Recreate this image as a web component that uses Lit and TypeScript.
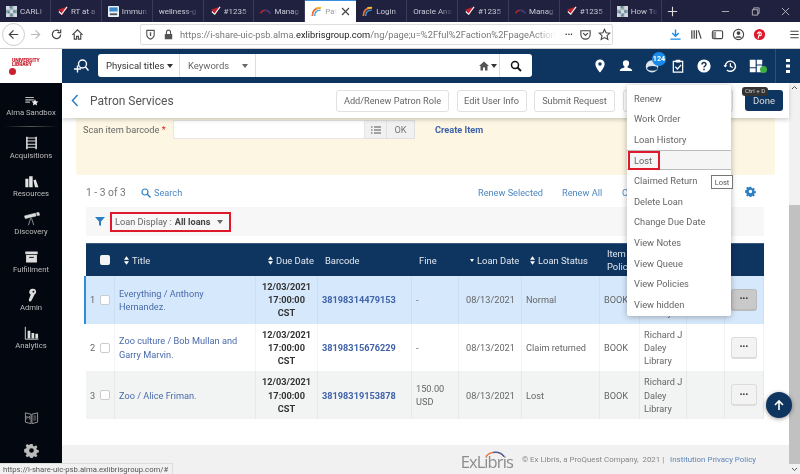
import { LitElement, html, css, svg } from "lit";
import { customElement } from "lit/decorators.js";

const tabs = [
  { t: "CARLI", i: "mosaic" }, { t: "RT at a", i: "check" }, { t: "Immun", i: "immun" }, { t: "wellness-g", i: "" },
  { t: "#1235", i: "check" }, { t: "Manag", i: "arc" }, { t: "Pat", i: "rainbow", active: true }, { t: "Login", i: "rainbow" },
  { t: "Oracle Ana", i: "" }, { t: "#1235", i: "check" }, { t: "Manag", i: "arc" }, { t: "#1235", i: "check" }, { t: "How To", i: "mosaic" },
];

const favicon = (k: string) => {
  if (k === "check") return html`<svg class="fav" viewBox="0 0 12 12"><path d="M1 4l9-3-4 9-2-4z" fill="#c9202c"/><path d="M2 6l3 3 6-8" fill="none" stroke="#fff" stroke-width="1.2"/></svg>`;
  if (k === "rainbow") return html`<svg class="fav" viewBox="0 0 12 12"><path d="M1.5 11C1.5 5 5 2 10.5 2" fill="none" stroke="#e8703a" stroke-width="2"/><path d="M4 11C4 7 6.500 4.500 10.500 4.500" fill="none" stroke="#3aa0dd" stroke-width="1.500"/><path d="M6 2.400C8 1.600 9.500 1.600 11 2" fill="none" stroke="#f2c230" stroke-width="2"/></svg>`;
  if (k === "arc") return html`<svg class="fav" viewBox="0 0 12 12"><path d="M.5 8C3 3.500 8 3.500 11.500 8" fill="none" stroke="#b3262d" stroke-width="1.400"/><path d="M5 5C7 4 9.500 5 11.500 8" fill="none" stroke="#27408b" stroke-width="1.400"/></svg>`;
  if (k === "immun") return html`<svg class="fav" viewBox="0 0 12 12"><rect width="12" height="12" rx="1" fill="#e9f2fb"/><rect x="1.500" y="1.500" width="9" height="4.500" fill="#3a8ad0"/><rect x="2" y="8" width="8" height="2" fill="#555"/></svg>`;
  if (k === "mosaic") return html`<svg class="fav" viewBox="0 0 12 12"><rect width="12" height="12" fill="#8fa9a8"/><path d="M0 0h4v4H0zM8 0h4v4H8zM4 4h4v4H4zM0 8h4v4H0zM8 8h4v4H8z" fill="#d3d8e2"/><path d="M4 0h2v2H4zM2 6h2v2H2zM8 5h2v2H8zM5 9h2v2H5z" fill="#5a7f9a"/></svg>`;
  return "";
};

const navItems: [string, any][] = [
  ["Alma Sandbox", svg`<path d="M3 5h11v1.500H3zM3 8h11v1.500H3zM3 11h6v1.500H3z" fill="#bbb"/><path d="M15.500 8l1.300 2.700 3 .4-2.200 2 .6 3-2.700-1.500-2.700 1.500.6-3-2.200-2 3-.4z" fill="#eee"/>`],
  ["Acquisitions", svg`<path d="M5 1v16M17 1v16" stroke="#ddd" stroke-width="2"/><path d="M5 2.500h12M5 6.500h12M5 10.500h12M5 14.500h12" fill="none" stroke="#ddd" stroke-width="1.300"/>`],
  ["Resources", svg`<path d="M3 6h4v11H3zM8 3h4.500v14H8zM13.500 8l3-1L20 17h-4.500z" fill="#e4e4e4"/>`],
  ["Discovery", svg`<path d="M2 5l14-3.500 1 3.500-14 3.500zM17.500 1l3-.5 1 3.500-3 .5zM10 8l-3 9M11 8l3 9" fill="#ddd" stroke="#ddd" stroke-width=".8"/>`],
  ["Fulfillment", svg`<path d="M3 2h16v3.500H3zM4 6.500h14V16H4z" fill="#ddd"/><path d="M8 9.500h6" stroke="#111" stroke-width="1.300"/>`],
  ["Admin", svg`<path fill-rule="evenodd" d="M13 1a4 4 0 0 1 2 7.500L10.500 17 8 17.500l-.5-2.500L10 8.300A4 4 0 0 1 13 1zm.500 2.500a1.200 1.200 0 1 0 0 2.400 1.200 1.200 0 0 0 0-2.400z" fill="#ddd"/>`],
  ["Analytics", svg`<path d="M3 1v16h17" fill="none" stroke="#ddd" stroke-width="1.200"/><path d="M6 6h3.500v10H6zM11 9h3.500v7H11zM16 10h3.500v6H16z" fill="#ddd"/>`],
];

const menu = ["Renew", "Work Order", "Loan History", "Lost", "Claimed Return", "Delete Loan", "Change Due Date", "View Notes", "View Queue", "View Policies", "View hidden"];

const rows = [
  { n: 1, title: "Everything / Anthony Hernandez.", code: "38198314479153", fine: "-", status: "Normal", sel: true },
  { n: 2, title: "Zoo culture / Bob Mullan and Garry Marvin.", code: "38198315676229", fine: "-", status: "Claim returned" },
  { n: 3, title: "Zoo / Alice Friman.", code: "38198319153878", fine: "150.00 USD", status: "Lost", alt: true },
];

const sort = html`<svg class="sort" viewBox="0 0 6 10"><path d="M3 0l3 4H0zM3 10l3-4H0z" fill="#fff"/></svg>`;

@customElement("app-root")
export class AppRoot extends LitElement {
  static styles = css`
    :host { display: flex; flex-direction: column; position: relative; width: 800px; height: 474px; overflow: hidden; background: #fff;
      font-family: Roboto, "Liberation Sans", sans-serif; font-size: 9.200px; color: #666; filter: blur(.35px); }
    .tabs { display: flex; height: 22px; background: #20213f; color: #c9cbd6; font-size: 8px; flex: none; align-items: stretch; }
    .tab { width: 50.900px; border-right: 1px solid #3a3b58; display: flex; align-items: center; gap: 3px; padding-left: 6px; box-sizing: border-box; white-space: nowrap; overflow: hidden; flex: none; }
    .tab span { -webkit-mask-image: linear-gradient(90deg, #000 65%, transparent); mask-image: linear-gradient(90deg, #000 65%, transparent); width: 27px; overflow: hidden; flex: none; }
    .tab.plain span { width: 40px; }
    .tab.active { background: #fff; color: #999; border-right: 0; border-top: 1px solid #3b8fe0; }
    .tab.active span { width: 12px; }
    .tab .x { margin-left: 1px; width: 9px; height: 9px; flex: none; }
    .fav { width: 11px; height: 11px; flex: none; }
    .newtab { width: 22px; display: flex; align-items: center; justify-content: center; }
    .winctl { margin-left: auto; display: flex; align-items: center; }
    .winctl span { width: 30px; display: flex; justify-content: center; }
    .winctl svg { width: 9px; height: 9px; }
    .urlbar { height: 26.500px; flex: none; display: flex; align-items: center; background: #fff; border-bottom: 1px solid #ccc; box-sizing: border-box; padding-left: 2px; }
    .round { width: 23px; height: 23px; border-radius: 50%; border: 1px solid #ccc; box-sizing: border-box; display: flex; align-items: center; justify-content: center; flex: none; }
    .ub { width: 13px; height: 13px; flex: none; }
    .navset { display: flex; align-items: center; gap: 8px; margin: 0 56px 0 4px; flex: none; }
    .addr { width: 473px; height: 21px; border: 1px solid #ddd; border-radius: 2px; box-sizing: border-box; display: flex; align-items: center; padding: 0 0 0 3px; gap: 5px; font-size: 9.300px; color: #777; white-space: nowrap; overflow: hidden; margin-right: 56px; flex: none; }
    .addr b { font-weight: 400; color: #222; }
    .addr .u { width: 376px; overflow: hidden; flex: none; -webkit-mask-image: linear-gradient(90deg, #000 94%, transparent); mask-image: linear-gradient(90deg, #000 94%, transparent); }
    .addr .r { display: flex; gap: 6px; margin-left: 4px; align-items: center; }
    .addr .r b { font-size: 7px; letter-spacing: .3px; }
    .tools { display: flex; align-items: center; gap: 8px; }
    .menu-btn { margin-left: 14px; }
    .bodyrow { flex: 1; min-height: 0; display: flex; }
    .side { width: 62px; flex: none; background: #03070f; display: flex; flex-direction: column; align-items: center; color: #bdbdbd; font-size: 7.700px; }
    .logo { width: 100%; height: 34.500px; background: #fff; flex: none; padding: 9px 0 0 12px; box-sizing: border-box; color: #c8202f; font-size: 5px; font-weight: 900; line-height: 4px; letter-spacing: -.1px; }
    .logo i { display: block; width: 7px; height: 7px; border-radius: 50%; background: #c8202f; margin: 2px 0 0 -3px; }
    .nav { height: 38px; display: flex; flex-direction: column; align-items: center; justify-content: flex-end; white-space: nowrap; flex: none; padding-bottom: 1px; box-sizing: border-box; gap: 1px; }
    .nav.first { height: 32px; }
    .navsep { height: 1px; margin: 8px 4px -4px; background: linear-gradient(90deg, transparent, #555, transparent); }
    .navlist { padding-top: 3px; width: 100%; display: flex; flex-direction: column; align-items: stretch; }
    .nav svg { width: 17px; height: 14px; flex: none; }
    .sideend { margin-top: auto; display: flex; flex-direction: column; align-items: center; gap: 18px; padding-bottom: 16px; }
    .sideend svg { width: 15px; height: 15px; }
    .main { flex: 1; min-width: 0; display: flex; flex-direction: column; }
    .hdr { height: 34.500px; background: #0e3460; flex: none; display: flex; align-items: center; padding-left: 11px; color: #fff; }
    .hdr > svg.find { width: 16px; height: 16px; margin-right: 9px; flex: none; }
    .search { width: 434px; height: 23px; background: #fff; border-radius: 3px; display: flex; color: #333; font-size: 9.500px; flex: none; align-items: stretch; }
    .search div { display: flex; align-items: center; border-right: 1px solid #ddd; box-sizing: border-box; }
    .s1 { width: 82px; padding-left: 8px; gap: 2px; }
    .s2 { width: 76px; padding: 0 7px 0 8px; justify-content: space-between; color: #666; }
    .s3 { flex: 1; justify-content: flex-end; padding-right: 2px; gap: 2px; }
    .search .s4 { width: 32px; justify-content: center; border: 0; }
    .caret { width: 0; height: 0; border: 3px solid transparent; border-top: 4px solid currentColor; border-bottom: 0; display: inline-block; }
    .hicons { display: flex; align-items: center; margin-left: 55px; position: relative; flex: none; }
    .hicons span { width: 26px; display: flex; justify-content: center; position: relative; flex: none; }
    .hicons svg { width: 14px; height: 14px; }
    .badge { position: absolute; left: 65px; top: 3px; width: 14px; height: 14px; border-radius: 50%; background: #1a8be8; font-size: 7.200px; font-weight: 700; display: flex; align-items: center; justify-content: center; }
    .dot { position: absolute; left: 16.500px; bottom: 0; width: 7px; height: 7px; border-radius: 50%; background: #3cb043; }
    .vline { width: 1px; height: 34px; background: #2c5078; margin-left: 6px; flex: none; }
    .kebab { width: 24px; display: flex; justify-content: center; flex: none; }
    .area { flex: 1; min-height: 0; display: flex; }
    .page { flex: 1; min-width: 0; display: flex; flex-direction: column; }
    .scrollbar { width: 11px; flex: none; background: #f1f1f1; display: flex; flex-direction: column; align-items: center; color: #555; }
    .scrollbar .gap { height: 112px; flex: none; background: #f1f1f1; }
    .scrollbar .thumb { width: 100%; flex: 1; background: #c1c1c1; }
    .scrollbar svg { width: 7px; height: 10px; flex: none; }
    .titlebar { height: 35px; flex: none; display: flex; align-items: center; padding-left: 9px; box-shadow: 0 2px 4px rgba(0,0,0,.18); position: relative; z-index: 1; background: #fff; }
    .titlebar > svg { width: 8px; height: 13px; margin-right: 11px; flex: none; }
    .titlebar h1 { margin: 0; font-size: 12px; font-weight: 400; color: #555; flex: none; width: 246px; }
    .btn { height: 22px; border: 1px solid #e1e1e1; border-radius: 3px; background: #fff; display: flex; align-items: center; justify-content: center; color: #666; box-sizing: border-box; white-space: nowrap; margin-right: 7.500px; flex: none; }
    .b1 { width: 113px; } .b2 { width: 70px; } .b3 { width: 81px; } .b4 { width: 110px; }
    .done { width: 38px; height: 21px; border-radius: 3px; background: #0e3460; color: #ddd; display: flex; align-items: center; justify-content: center; font-size: 9.500px; margin-left: 5px; position: relative; flex: none; }
    .done em { position: absolute; top: -3px; left: -3px; height: 9px; padding: 0 3px; border-radius: 3px; background: #333; color: #ccc; font-style: normal; font-size: 6.200px; line-height: 9px; white-space: nowrap; }
    .panel { height: 57px; flex: none; margin: 0 14px; background: #fdf6e3; border-radius: 0 0 3px 3px; display: flex; align-items: flex-start; padding: 2px 0 0 7px; box-sizing: border-box; }
    .panel label { width: 90px; flex: none; line-height: 19px; white-space: nowrap; }
    .panel label b { color: #d22; font-weight: 400; }
    .inp { width: 192px; height: 19px; background: #fff; border: 1px solid #e6e6e6; box-sizing: border-box; flex: none; }
    .ib { height: 19px; background: #f1f1f1; border: 1px solid #e0e0e0; border-left: 0; box-sizing: border-box; display: flex; align-items: center; justify-content: center; flex: none; color: #777; }
    .ib.list { width: 22px; } .ib.ok { width: 28px; }
    .ib svg { width: 10px; height: 8px; }
    .create { margin-left: 20px; line-height: 19px; color: #3f62a8; font-weight: 700; }
    .tb { height: 32px; flex: none; display: flex; align-items: center; padding: 3px 0 0 24px; box-sizing: border-box; color: #4c87c0; position: relative; }
    .tb .cnt { color: #777; font-size: 10.300px; width: 55px; flex: none; }
    .tb .srch { display: flex; gap: 3px; align-items: center; width: 337px; flex: none; }
    .tb .srch svg { width: 10px; height: 10px; }
    .tb .ra { width: 84px; flex: none; }
    .tb .rb { width: 60px; flex: none; }
    .tb .gear { width: 11px; height: 11px; position: absolute; left: 683px; top: 11px; }
    .filter { height: 29px; flex: none; margin: 0 24px; width: 678px; background: #f7f7f7; display: flex; align-items: center; padding-left: 9px; box-sizing: border-box; }
    .filter svg { width: 10px; height: 9px; margin-right: 5px; }
    .redbox { height: 20px; width: 121px; border: 2px solid #e0182b; box-sizing: border-box; display: flex; align-items: center; padding-left: 3px; gap: 3px; color: #666; white-space: nowrap; }
    .redbox b { color: #444; } .redbox .caret { margin-left: 4px; }
    .table { margin: 7px 0 0 24px; width: 678px; flex: none; }
    .r { display: grid; grid-template-columns: 9px 20px 141px 62px 94px 47px 63px 78px 40px 47px 38px 39px; align-items: stretch; }
    .r.head { height: 33px; background: #0e3460; color: #e3e8ee; border-top: 1px solid #3c5a80; box-sizing: border-box; font-size: 9.400px; line-height: 13px; }
    .r.body { height: 47.700px; line-height: 13.200px; color: #666; background: #fff; }
    .r.body.sel { background: #d6e9fc; box-shadow: -2px 0 0 #2d8fd5; }
    .r.body.alt { background: #f2f4f4; }
    .c { display: flex; align-items: center; padding: 0 4px; box-sizing: border-box; overflow: hidden; }
    .r.body .c { border-right: 1px solid rgba(0,0,0,.045); }
    .r.head .c { gap: 3px; white-space: nowrap; overflow: visible; padding-left: 7px; }
    .r.head .h-title { padding-left: 9px; }
    .r.head .h-due { padding-left: 12px; }
    .r.head .h-loan { padding-left: 11px; }
    .r.head .h-status { padding-left: 8px; }
    .sort { width: 5px; height: 9px; flex: none; }
    .tri { width: 0; height: 0; border: 2.500px solid transparent; border-top: 3.500px solid #fff; border-bottom: 0; flex: none; }
    .r .c.num { padding: 0 0 0 4px; overflow: visible; border-right: 0; } .r .c.ck { padding: 0; justify-content: center; }
    .box { width: 10px; height: 10px; border-radius: 2px; background: #fff; border: 1px solid #ccc; box-sizing: border-box; display: block; }
    .head .box { border: 0; background: #f4f4f4; }
    .ti { color: #4a6aab; }
    .du { color: #333; font-weight: 700; text-align: center; justify-content: center; }
    .bc { color: #3f62a8; font-weight: 700; }
    .ld { padding-left: 7px; }
    .lib { padding-right: 0; }
    .dots { width: 26px; height: 22px; border: 1px solid #dcdcdc; border-bottom-width: 2px; border-radius: 3px; background: #f3f3f3; box-sizing: border-box; display: flex; align-items: center; justify-content: center; color: #333; font-weight: 900; font-size: 7px; line-height: 6px; letter-spacing: .2px; }
    .sel .dots { background: #c9c9c9; border-color: #bbb; }
    .dc { justify-content: center; padding: 0; }
    .foot { margin-top: auto; height: 29px; flex: none; background: #f1f1f1; display: flex; align-items: center; justify-content: flex-end; padding: 0 33px 0 0; font-size: 7.900px; color: #888; white-space: nowrap; }
    .ex { position: relative; margin-right: 9px; font-family: "Open Sans", sans-serif; font-size: 16.500px; letter-spacing: -.9px; color: #8c8c8c; line-height: 18px; padding-top: 4px; }
    .ex svg { position: absolute; left: 24px; top: 1px; width: 20px; height: 7px; }
    .foot a { color: #5d86b8; margin-left: 4px; }
    .menu { position: absolute; left: 627px; top: 85px; width: 104px; height: 231px; background: #fff; border-radius: 2px; box-shadow: 0 1px 6px rgba(0,0,0,.3); padding: 3px 0 0; box-sizing: border-box; z-index: 5; color: #666; font-size: 9.300px; }
    .mi { height: 20.600px; display: flex; align-items: center; padding-left: 7px; box-sizing: border-box; }
    .mi.on { background: #f5f5f5; border-top: 1px solid #bbb; border-bottom: 1px solid #bbb; padding-left: 1px; }
    .mi.on span { border: 2px solid #e0182b; height: 19px; width: 32px; box-sizing: border-box; display: flex; align-items: center; padding-left: 4px; flex: none; }
    .tip { position: absolute; left: 711px; top: 175px; height: 14px; width: 22px; background: #fff; border: 1px solid #777; box-sizing: border-box; display: flex; align-items: center; justify-content: center; font-size: 7.500px; z-index: 6; color: #555; }
    .status { position: absolute; left: 0; bottom: 0; height: 11px; width: 173px; background: #f1f1f1; border: 1px solid #ddd; border-left: 0; border-bottom: 0; box-sizing: border-box; font-size: 7.700px; line-height: 11px; color: #555; padding-left: 3px; white-space: nowrap; z-index: 7; overflow: hidden; }
    .up { position: absolute; left: 766px; top: 392px; width: 26px; height: 26px; border-radius: 50%; background: #0e3460; box-shadow: 0 1px 4px rgba(0,0,0,.4); display: flex; align-items: center; justify-content: center; z-index: 6; }
    .up svg { width: 12px; height: 12px; }
  `;

  render() {
    return html`
      <div class="tabs">
        ${tabs.map(t => html`<div class="tab ${t.active ? "active" : ""} ${t.i ? "" : "plain"}">${favicon(t.i)}<span>${t.t}</span>${t.active ? html`<svg class="x" viewBox="0 0 9 9"><path d="M1 1l7 7M8 1L1 8" stroke="#444" stroke-width="1.200"/></svg>` : ""}</div>`)}
        <div class="newtab"><svg class="ub" viewBox="0 0 14 14"><path d="M7 2v10M2 7h10" stroke="#ddd" stroke-width="1.200"/></svg></div>
        <div class="winctl">
          <span><svg viewBox="0 0 10 10"><path d="M1 5h8" stroke="#bbb"/></svg></span>
          <span><svg viewBox="0 0 10 10"><path d="M1.500 3h6v6h-6zM3 3V1h6v6H7.500" fill="none" stroke="#bbb"/></svg></span>
          <span><svg viewBox="0 0 10 10"><path d="M1 1l8 8M9 1l-8 8" stroke="#bbb"/></svg></span>
        </div>
      </div>
      <div class="urlbar">
        <div class="round"><svg class="ub" viewBox="0 0 14 14"><path d="M12 7H2.500M7 2.500L2.500 7 7 11.500" fill="none" stroke="#444" stroke-width="1.300"/></svg></div>
        <div class="navset">
          <svg class="ub" viewBox="0 0 14 14"><path d="M2 7h9.500M7 2.500L11.500 7 7 11.500" fill="none" stroke="#bbb" stroke-width="1.300"/></svg>
          <svg class="ub" viewBox="0 0 14 14"><path d="M11.500 7A4.500 4.500 0 1 1 10 3.500M11.500 1.500v3.500H8" fill="none" stroke="#444" stroke-width="1.300"/></svg>
          <svg class="ub" viewBox="0 0 14 14"><path d="M1.500 7.500L7 2l5.500 5.500M3.500 6.500V12h2.500V9h2v3h2.500V6.500" fill="none" stroke="#444" stroke-width="1.200"/></svg>
        </div>
        <div class="addr">
          <svg class="ub" viewBox="0 0 14 14"><path d="M3 2.500h8v5c0 2.500-2 3.500-4 4.500-2-1-4-2-4-4.500z" fill="none" stroke="#555" stroke-width="1.200"/><path d="M7 4.500v4" stroke="#555" stroke-width="1.500"/></svg>
          <svg class="ub" viewBox="0 0 14 14"><path d="M3 6.500h8V12H3z" fill="#555"/><path d="M4.800 6.500V4.500a2.200 2.200 0 0 1 4.400 0v2" fill="none" stroke="#555" stroke-width="1.200"/></svg>
          <div class="u">https://i-share-uic-psb.alma.<b>exlibrisgroup.com</b>/ng/page;u=%2Fful%2Faction%2FpageAction.lo</div>
          <div class="r">
            <b>•••</b>
            <svg class="ub" viewBox="0 0 14 14"><path d="M2 3h10v4a5 5 0 0 1-10 0z" fill="none" stroke="#444" stroke-width="1.200"/><path d="M4.500 5.500L7 8l2.500-2.500" fill="none" stroke="#444" stroke-width="1.200"/></svg>
            <svg class="ub" viewBox="0 0 14 14"><path d="M7 1.500l1.700 3.700 4 .4-3 2.700.9 4L7 10.300l-3.600 2 .9-4-3-2.700 4-.4z" fill="none" stroke="#444" stroke-width="1.200"/></svg>
          </div>
        </div>
        <div class="tools">
          <svg class="ub" viewBox="0 0 14 14"><path d="M7 1.500v7M3.500 5.500L7 9l3.500-3.500M1.500 12h11" fill="none" stroke="#1a8be8" stroke-width="1.500"/></svg>
          <svg class="ub" viewBox="0 0 14 14"><path d="M2 2.500v9M4.500 2.500v9M7 2.500v9M9 2.500l3 9" fill="none" stroke="#444" stroke-width="1.300"/></svg>
          <svg class="ub" viewBox="0 0 14 14"><rect x="1.500" y="3" width="11" height="8.500" rx="1.500" fill="none" stroke="#444" stroke-width="1.200"/><path d="M2 4h3.500v7H2z" fill="#999"/></svg>
          <svg class="ub" viewBox="0 0 14 14"><circle cx="7" cy="7" r="5.500" fill="none" stroke="#444" stroke-width="1.200"/><circle cx="7" cy="5.500" r="2" fill="#444"/><path d="M3.500 10.500c1-2 6-2 7 0" fill="#444"/></svg>
          <svg class="ub" viewBox="0 0 14 14"><circle cx="7" cy="7" r="6" fill="#e0182b"/><path d="M5.500 11.500L7 5.500M5 6.500c0-3 4.500-2.500 4 .3-.3 1.700-2 1.700-2.500.7" fill="none" stroke="#fff" stroke-width="1.200"/></svg>
          <svg class="ub menu-btn" viewBox="0 0 14 14"><path d="M2.500 3.500h9M2.500 7h9M2.500 10.500h9" stroke="#444" stroke-width="1.300"/></svg>
        </div>
      </div>
      <div class="bodyrow">
        <div class="side">
          <div class="logo">UNIVERSITY<br>LIBRARY<i></i></div>
          <div class="navlist">
            ${navItems.map(([l, ic], i) => html`
              <div class="nav ${i === 0 ? "first" : ""}"><svg viewBox="0 0 22 18">${ic}</svg><span>${l}</span></div>
              ${i === 0 ? html`<div class="navsep"></div>` : ""}`)}
          </div>
          <div class="sideend">
            <svg viewBox="0 0 16 16"><path d="M1.500 3l6 1.500v10l-6-1.500zM8.500 4.500l6-1.500v10l-6 1.500z" fill="none" stroke="#999" stroke-width="1"/><path d="M10 6.500h3M10 8.500h3M10 10.500h3" stroke="#999" stroke-width=".8"/><path d="M3 10V6.500l1.500 2 1.500-2V10" fill="none" stroke="#999" stroke-width=".8"/></svg>
            <svg viewBox="0 0 16 16"><path fill="#bbb" fill-rule="evenodd" d="M6.800 1h2.400l.4 2 1.300.6 1.800-1.100 1.600 1.700-1.100 1.700.6 1.400 2 .4v2.400l-2 .4-.6 1.400 1.100 1.700-1.600 1.700-1.800-1.100-1.300.6-.4 2H6.800l-.4-2-1.300-.6-1.800 1.100-1.600-1.700 1.100-1.700-.6-1.400-2-.4V6.300l2-.4.6-1.400-1.100-1.700 1.600-1.700 1.800 1.100 1.300-.6zM8 5.500a2.500 2.500 0 1 0 0 5 2.500 2.500 0 0 0 0-5z"/></svg>
          </div>
        </div>
        <div class="main">
          <div class="hdr">
            <svg class="find" viewBox="0 0 16 16"><circle cx="9.500" cy="6" r="4" fill="none" stroke="#fff" stroke-width="1.400"/><path d="M12.500 9l3 3.500M1 11h7M4.500 7.500v7" stroke="#fff" stroke-width="1.400"/></svg>
            <div class="search">
              <div class="s1">Physical titles <i class="caret"></i></div>
              <div class="s2">Keywords <i class="caret"></i></div>
              <div class="s3"><svg width="10" height="10" viewBox="0 0 10 10"><path d="M5 .5L0 5h1.500v4.500h2.500v-3h2v3h2.500V5H10z" fill="#555"/></svg><i class="caret"></i></div>
              <div class="s4"><svg width="12" height="12" viewBox="0 0 12 12"><circle cx="5" cy="5" r="3.500" fill="none" stroke="#111" stroke-width="1.500"/><path d="M7.500 7.500L11 11" stroke="#111" stroke-width="1.800"/></svg></div>
            </div>
            <div class="hicons">
              <span><svg viewBox="0 0 18 18"><path fill="#fff" fill-rule="evenodd" d="M9 .5a6 6 0 0 1 6 6C15 11 9 17.500 9 17.500S3 11 3 6.500A6 6 0 0 1 9 .5zm0 3.800a2.200 2.200 0 1 0 0 4.400 2.200 2.200 0 0 0 0-4.400z"/></svg></span>
              <span><svg viewBox="0 0 18 18"><path d="M9 1.500a4 4 0 0 1 4 4c0 2-1 3.500-2 4.200v1.300c2 .6 6 1.500 6 4.500H1c0-3 4-3.900 6-4.500V9.700C6 9 5 7.500 5 5.500a4 4 0 0 1 4-4z" fill="#fff"/></svg></span>
              <span><svg viewBox="0 0 18 18"><circle cx="9" cy="9.500" r="8" fill="#dfe6ee"/><ellipse cx="9.500" cy="12" rx="6.500" ry="3" fill="#0e3460"/></svg></span>
              <span><svg viewBox="0 0 18 18"><path d="M3 3h12v14H3z" fill="none" stroke="#fff" stroke-width="1.600"/><path d="M6 1h6v3.500H6z" fill="#fff"/><path d="M5.500 10l2.800 2.800L13 7.500" fill="none" stroke="#fff" stroke-width="1.700"/></svg></span>
              <span><svg viewBox="0 0 18 18"><circle cx="9" cy="9" r="8.500" fill="#fff"/><path d="M6.500 7c0-3.300 5-3.300 5 0 0 2-2.500 2-2.500 4" fill="none" stroke="#0e3460" stroke-width="1.900"/><path d="M8 12.500h2V14.500H8z" fill="#0e3460"/></svg></span>
              <span><svg viewBox="0 0 18 18"><path d="M3 9.500A6.500 6.500 0 1 1 5 14" fill="none" stroke="#fff" stroke-width="1.800"/><path d="M.5 8h5L3 11z" fill="#fff"/><path d="M9.500 5.500V9.500l3 1.500" fill="none" stroke="#fff" stroke-width="1.600"/></svg></span>
              <span><svg viewBox="0 0 18 18"><path d="M1 1h7.500v9.500H1zM10 1h7v6h-7zM1 12h7.500v5H1zM10 8.500h7V17h-7z" fill="#fff"/></svg><i class="dot"></i></span>
              <div class="badge">124</div>
              <div class="vline"></div>
              <div class="kebab"><svg width="4" height="12" viewBox="0 0 4 14"><path d="M0 0h4v3H0zM0 5.500h4v3H0zM0 11h4v3H0z" fill="#fff"/></svg></div>
            </div>
          </div>
          <div class="area">
            <div class="page">
              <div class="titlebar">
                <svg viewBox="0 0 8 13"><path d="M6.500 1L1.500 6.500l5 5.500" fill="none" stroke="#2d7fc4" stroke-width="1.500"/></svg>
                <h1>Patron Services</h1>
                <div class="btn b1">Add/Renew Patron Role</div>
                <div class="btn b2">Edit User Info</div>
                <div class="btn b3">Submit Request</div>
                <div class="btn b4"></div>
                <div class="done"><em>Ctrl + D</em>Done</div>
              </div>
              <div class="panel">
                <label>Scan item barcode <b>*</b></label>
                <div class="inp"></div>
                <div class="ib list"><svg viewBox="0 0 10 8"><path d="M0 1h1.500M3 1h7M0 4h1.500M3 4h7M0 7h1.500M3 7h7" stroke="#555" stroke-width="1.200"/></svg></div>
                <div class="ib ok">OK</div>
                <div class="create">Create Item</div>
              </div>
              <div class="tb">
                <div class="cnt">1 - 3 of 3</div>
                <div class="srch"><svg viewBox="0 0 10 10"><circle cx="4" cy="4" r="3" fill="none" stroke="#2d7fc4" stroke-width="1.200"/><path d="M6.300 6.300L9.500 9.500" stroke="#2d7fc4" stroke-width="1.400"/></svg>Search</div>
                <div class="ra">Renew Selected</div>
                <div class="rb">Renew All</div>
                <div>C</div>
                <svg class="gear" viewBox="0 0 16 16"><path fill="#2d7fc4" fill-rule="evenodd" d="M6.800 1h2.400l.4 2 1.300.6 1.800-1.100 1.600 1.700-1.100 1.700.6 1.400 2 .4v2.400l-2 .4-.6 1.400 1.100 1.700-1.600 1.700-1.800-1.100-1.300.6-.4 2H6.800l-.4-2-1.300-.6-1.800 1.100-1.600-1.700 1.100-1.700-.6-1.400-2-.4V6.300l2-.4.6-1.400-1.100-1.700 1.600-1.700 1.800 1.100 1.300-.6zM8 5.500a2.500 2.500 0 1 0 0 5 2.500 2.500 0 0 0 0-5z"/></svg>
              </div>
              <div class="filter">
                <svg viewBox="0 0 10 9"><path d="M0 0h10L6 4.500V9L4 8V4.500z" fill="#2d7fc4"/></svg>
                <div class="redbox">Loan Display : <b>All loans</b><i class="caret"></i></div>
              </div>
              <div class="table">
                <div class="r head">
                  <div class="c"></div><div class="c ck"><i class="box"></i></div>
                  <div class="c h-title">${sort}<span>Title</span></div>
                  <div class="c h-due">${sort}<span>Due Date</span></div>
                  <div class="c"><span>Barcode</span></div>
                  <div class="c"><span>Fine</span></div>
                  <div class="c h-loan"><i class="tri"></i><span>Loan Date</span></div>
                  <div class="c h-status">${sort}<span>Loan Status</span></div>
                  <div class="c"><span>Item<br>Policy</span></div>
                  <div class="c"></div><div class="c"></div><div class="c"></div>
                </div>
                ${rows.map(r => html`
                  <div class="r body ${r.sel ? "sel" : ""} ${r.alt ? "alt" : ""}">
                    <div class="c num">${r.n}</div>
                    <div class="c ck"><i class="box"></i></div>
                    <div class="c ti"><span>${r.title}</span></div>
                    <div class="c du"><span>12/03/2021 17:00:00 CST</span></div>
                    <div class="c bc">${r.code}</div>
                    <div class="c"><span>${r.fine}</span></div>
                    <div class="c ld">08/13/2021</div>
                    <div class="c"><span>${r.status}</span></div>
                    <div class="c">BOOK</div>
                    <div class="c lib"><span>Richard J Daley Library</span></div>
                    <div class="c"></div>
                    <div class="c dc"><div class="dots">•••</div></div>
                  </div>`)}
              </div>
              <div class="foot">
                <div class="ex"><svg viewBox="0 0 20 7"><path d="M1 6.500C5 1 15 1 19 6.500" fill="none" stroke="#e8703a" stroke-width="1.300"/><path d="M8 2.500c4-1 8 0 11 4" fill="none" stroke="#3a5fb0" stroke-width="1.300"/></svg>ExLibris</div>
                © Ex Libris, a ProQuest Company,&nbsp; 2021 |&nbsp; <a>Institution Privacy Policy</a>
              </div>
            </div>
            <div class="scrollbar">
              <svg viewBox="0 0 7 10"><path d="M1 6l2.500-2.500L6 6" fill="none" stroke="#555"/></svg>
              <div class="gap"></div>
              <div class="thumb"></div>
              <svg viewBox="0 0 7 10"><path d="M1 4l2.500 2.500L6 4" fill="none" stroke="#555"/></svg>
            </div>
          </div>
        </div>
      </div>
      <div class="menu">
        ${menu.map(m => html`<div class="mi ${m === "Lost" ? "on" : ""}"><span>${m}</span></div>`)}
      </div>
      <div class="tip">Lost</div>
      <div class="up"><svg viewBox="0 0 12 12"><path d="M6 11V2M2 6l4-4 4 4" fill="none" stroke="#fff" stroke-width="1.600"/></svg></div>
      <div class="status">https://i-share-uic-psb.alma.exlibrisgroup.com/#</div>
    `;
  }
}
